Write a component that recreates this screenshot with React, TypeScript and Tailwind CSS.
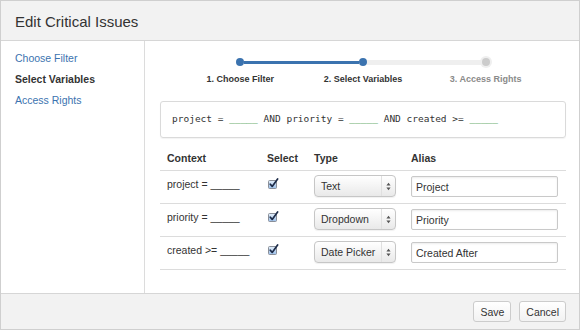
import React from "react";

const Blank = () => <span className="text-[#14892c]">_____</span>;

const Check = () => (
  <svg width="11" height="11" viewBox="0 0 11 11" className="block">
    <defs>
      <linearGradient id="cbg" x1="0" y1="0" x2="0" y2="1">
        <stop offset="0" stopColor="#e4effa" />
        <stop offset="1" stopColor="#9cc0ea" />
      </linearGradient>
    </defs>
    <rect x="0.5" y="2.5" width="8" height="8" rx="1" fill="url(#cbg)" stroke="#8a8f99" />
    <path d="M2.3 6.2 L4.2 8.4 L9.6 1" fill="none" stroke="#1c2b48" strokeWidth="1.7" strokeLinecap="round" strokeLinejoin="round" />
  </svg>
);

const Select = ({ label }: { label: string }) => (
  <div className="w-[82px] h-[22px] rounded-[4px] border border-[#c6c6c6] bg-gradient-to-b from-white to-[#e9e9e9] flex items-center shadow-[0_1px_1px_rgba(0,0,0,0.06)]">
    <span className="flex-1 pl-[6px] text-[10.5px] text-[#333] leading-[14px]">{label}</span>
    <span className="w-[14px] h-full border-l border-[#e0e0e0] flex items-center justify-center">
      <svg width="5" height="9" viewBox="0 0 5 9" className="block">
        <path d="M2.5 0.8 L4.6 3.6 L0.4 3.6Z M2.5 8.2 L4.6 5.4 L0.4 5.4Z" fill="#555" />
      </svg>
    </span>
  </div>
);

const rows = [
  { ctx: "project = ", type: "Text", alias: "Project" },
  { ctx: "priority = ", type: "Dropdown", alias: "Priority" },
  { ctx: "created >= ", type: "Date Picker", alias: "Created After" },
];

export default function App() {
  return (
    <div
      className="w-[580px] h-[330px] border border-[#cfcfcf] bg-white flex flex-col text-[#333]"
      style={{ fontFamily: '"Liberation Sans", Arial, sans-serif' }}
    >
      {/* Header */}
      <div className="h-[40px] shrink-0 bg-[#f2f2f2] border-b border-[#d6d6d6] flex items-center pl-[14px] pt-[2px]">
        <span className="text-[15px] leading-[18px] text-[#333]">Edit Critical Issues</span>
      </div>

      {/* Body */}
      <div className="h-[252px] shrink-0 flex">
        <div className="w-[144px] shrink-0 border-r border-[#dcdcdc] pl-[14px] pt-[7px] text-[10.5px] leading-[21px]">
          <div className="text-[#3b73af]">Choose Filter</div>
          <div className="font-bold text-[#333]">Select Variables</div>
          <div className="text-[#3b73af]">Access Rights</div>
        </div>

        <div className="flex-1 pl-[15px] pr-[13px] pt-[17px]">
          {/* Progress tracker */}
          <div className="w-[368px] mx-auto">
            <div className="flex items-center px-[57px] h-[8px]">
              <span className="w-[8px] h-[8px] rounded-full bg-[#3b73af] shrink-0" />
              <span className="flex-1 h-[3px] bg-[#3b73af]" />
              <span className="w-[8px] h-[8px] rounded-full bg-[#3b73af] shrink-0" />
              <span className="flex-1 h-[5px] bg-[#efefef]" />
              <span className="w-[8px] h-[8px] rounded-full bg-[#cccccc] shrink-0 ring-2 ring-[#efefef]" />
            </div>
            <div className="grid grid-cols-3 mt-[7px] text-center text-[9px] font-bold leading-[12px]">
              <span className="text-[#333]">1. Choose Filter</span>
              <span className="text-[#333]">2. Select Variables</span>
              <span className="text-[#8a8a8a]">3. Access Rights</span>
            </div>
          </div>

          {/* Query */}
          <div
            className="mt-[16px] h-[37px] border border-[#dadada] rounded-[3px] shadow-[0_1px_1px_rgba(0,0,0,0.05)] flex items-center pl-[11px] text-[9.5px] text-[#333] whitespace-pre"
            style={{ fontFamily: '"DejaVu Sans Mono", "Liberation Mono", monospace' }}
          >
            project = <Blank /> AND priority = <Blank /> AND created &gt;= <Blank />
          </div>

          {/* Table */}
          <div className="mt-[8px] text-[10.5px]">
            <div className="h-[25px] border-b border-[#dcdcdc] grid grid-cols-[100px_47px_97px_1fr] items-center font-bold leading-[14px]">
              <span className="pl-[7px]">Context</span>
              <span className="pl-[7px]">Select</span>
              <span className="pl-[7px]">Type</span>
              <span className="pl-[7px]">Alias</span>
            </div>
            {rows.map((r) => (
              <div
                key={r.alias}
                className="h-[33px] border-b border-[#dcdcdc] grid grid-cols-[100px_47px_97px_1fr] items-start pt-[4px]"
              >
                <span className="pl-[7px] pt-[2px] leading-[14px]">{r.ctx}_____</span>
                <span className="pl-[8px] pt-[3px]">
                  <Check />
                </span>
                <span className="pl-[7px]">
                  <Select label={r.type} />
                </span>
                <span className="pl-[7px] pt-[1px]">
                  <div className="w-[147px] h-[21px] border border-[#c9c9c9] rounded-[2px] shadow-[inset_0_1px_2px_rgba(0,0,0,0.08)] flex items-center pl-[4px] leading-[14px] text-[#333]">
                    {r.alias}
                  </div>
                </span>
              </div>
            ))}
          </div>
        </div>
      </div>

      {/* Footer */}
      <div className="flex-1 bg-[#f2f2f2] border-t border-[#d6d6d6] flex justify-end items-start gap-[8px] pr-[13px] pt-[7px]">
        <button className="h-[21px] px-[6px] border border-[#cccccc] rounded-[3px] bg-gradient-to-b from-white to-[#f2f2f2] text-[10.5px] text-[#333] leading-[14px]">
          Save
        </button>
        <button className="h-[21px] px-[6px] border border-[#cccccc] rounded-[3px] bg-gradient-to-b from-white to-[#f2f2f2] text-[10.5px] text-[#333] leading-[14px]">
          Cancel
        </button>
      </div>
    </div>
  );
}
